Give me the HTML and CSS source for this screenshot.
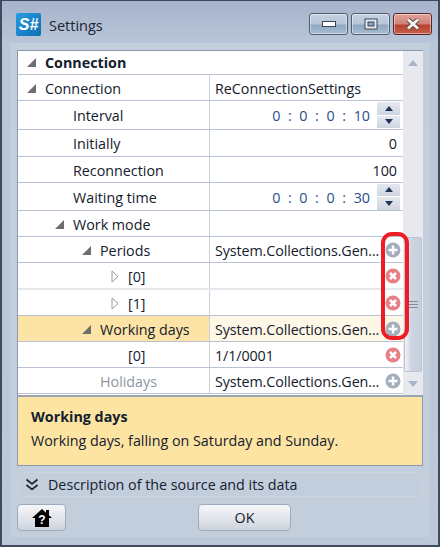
FILE: index.html
```html
<!DOCTYPE html>
<html lang="en">
<head>
<meta charset="utf-8">
<title>Settings</title>
<link rel="stylesheet" href="styles.css">
</head>
<body>
<div class="window">
  <header class="titlebar">
    <div class="logo">S#</div>
    <div class="title">Settings</div>
    <div class="controls">
      <div class="ctl"><svg width="14" height="8" viewBox="0 0 14 8"><rect x="0.5" y="1.5" width="13" height="5" fill="#fff" stroke="#3a4454"/></svg></div>
      <div class="ctl"><svg width="14" height="12" viewBox="0 0 14 12"><rect x="1" y="1" width="12" height="10" fill="#e9edf2" stroke="#3a4454"/><rect x="4" y="4" width="6" height="4" fill="#8fa3bb" stroke="#3a4454"/></svg></div>
      <div class="ctl close"><svg width="16" height="12" viewBox="0 0 16 12"><path d="M3 1.5l10 9M13 1.5l-10 9" stroke="#4a3a3a" stroke-width="4.4"/><path d="M3 1.5l10 9M13 1.5l-10 9" stroke="#f2f2f2" stroke-width="3"/></svg></div>
    </div>
  </header>
  <main class="panel">
    <section class="editor">
      <div class="gridwrap">
        <div class="rows">
          <div class="row head"><div class="name"><svg class="tri" width="9" height="9" viewBox="0 0 9 9"><path d="M9 0v9H0z"/></svg><b>Connection</b></div></div>
          <div class="row r26"><div class="name"><svg class="tri" width="9" height="9" viewBox="0 0 9 9"><path d="M9 0v9H0z"/></svg>Connection</div><div class="val">ReConnectionSettings</div></div>
          <div class="row r29"><div class="name l1">Interval</div><div class="val num"><span class="time">0 : 0 : 0 : 10</span><div class="spin"><span class="up"></span><span class="dn"></span></div></div></div>
          <div class="row r27"><div class="name l1">Initially</div><div class="val right">0</div></div>
          <div class="row r26"><div class="name l1">Reconnection</div><div class="val right">100</div></div>
          <div class="row r28"><div class="name l1">Waiting time</div><div class="val num"><span class="time">0 : 0 : 0 : 30</span><div class="spin"><span class="up"></span><span class="dn"></span></div></div></div>
          <div class="row r26"><div class="name l1t"><svg class="tri" width="9" height="9" viewBox="0 0 9 9"><path d="M9 0v9H0z"/></svg>Work mode</div><div class="val"></div></div>
          <div class="row r26"><div class="name l2t"><svg class="tri" width="9" height="9" viewBox="0 0 9 9"><path d="M9 0v9H0z"/></svg>Periods</div><div class="val"><span class="txt">System.Collections.Gen...</span><svg class="ic" width="16" height="16" viewBox="0 0 16 16"><use href="#plus"/></svg></div></div>
          <div class="row r27 soft"><div class="name l3t"><svg class="open" width="8" height="13" viewBox="0 0 8 13"><path d="M1 1l6 5.5L1 12z"/></svg>[0]</div><div class="val"><span class="txt"></span><svg class="ic" width="16" height="16" viewBox="0 0 16 16"><use href="#del"/></svg></div></div>
          <div class="row r26"><div class="name l3t"><svg class="open" width="8" height="13" viewBox="0 0 8 13"><path d="M1 1l6 5.5L1 12z"/></svg>[1]</div><div class="val"><span class="txt"></span><svg class="ic" width="16" height="16" viewBox="0 0 16 16"><use href="#del"/></svg></div></div>
          <div class="row r26 selected"><div class="name l2t"><svg class="tri" width="9" height="9" viewBox="0 0 9 9"><path d="M9 0v9H0z"/></svg>Working days</div><div class="val"><span class="txt">System.Collections.Gen...</span><svg class="ic" width="16" height="16" viewBox="0 0 16 16"><use href="#plus"/></svg></div></div>
          <div class="row r26"><div class="name l3">[0]</div><div class="val"><span class="txt">1/1/0001</span><svg class="ic" width="16" height="16" viewBox="0 0 16 16"><use href="#del"/></svg></div></div>
          <div class="row r26"><div class="name l2 muted">Holidays</div><div class="val"><span class="txt">System.Collections.Gen...</span><svg class="ic" width="16" height="16" viewBox="0 0 16 16"><use href="#plus"/></svg></div></div>
        </div>
        <div class="scroll">
          <div class="arrow aup"></div>
          <div class="track"><div class="thumb"><i></i><i></i><i></i></div></div>
          <div class="arrow adn"></div>
        </div>
        <div class="callout"></div>
      </div>
      <div class="desc">
        <div class="desc-h">Working days</div>
        <div class="desc-t">Working days, falling on Saturday and Sunday.</div>
      </div>
    </section>
    <div class="expander">
      <svg width="14" height="13" viewBox="0 0 14 13"><path d="M1.500 1.500L7 6l5.500-4.500M1.500 7L7 11.500 12.500 7" fill="none" stroke="#1c2430" stroke-width="1.700"/></svg>
      <span>Description of the source and its data</span>
    </div>
    <footer class="footer">
      <button class="btn home"><svg width="20" height="18" viewBox="0 0 20 18"><path d="M10 0L0 9h3v9h14V9h3l-3-2.700V1h-3v2.800z" fill="#000"/><text x="10" y="15" text-anchor="middle" class="q">?</text></svg></button>
      <button class="btn ok">OK</button>
    </footer>
  </main>
</div>
<svg class="defs" width="0" height="0">
  <defs>
    <g id="plus"><circle cx="8" cy="8" r="7.500" fill="#a3adbb"/><path d="M8 3.500v9M3.500 8h9" stroke="#fff" stroke-width="2.400"/></g>
    <g id="del"><circle cx="8" cy="8" r="7.500" fill="#e87f85"/><path d="M5 5l6 6M11 5l-6 6" stroke="#fff" stroke-width="2.600"/></g>
  </defs>
</svg>
</body>
</html>
```

FILE: styles.css
```css
* { box-sizing: border-box; }
html, body { margin: 0; height: 100%; }
body {
  font-family: "Open Sans", "Noto Sans", sans-serif;
  font-size: 14.3px;
  color: #14202e;
  overflow: hidden;
}
.defs { position: absolute; }
.window {
  width: 440px;
  height: 547px;
  display: flex;
  flex-direction: column;
  background: linear-gradient(#a6b3cc 0, #bac6d8 45px, #bcc8da 100%);
  border: 1px solid #3f4a5c;
  border-width: 1px 2px 2px 2px;
  padding: 0 8px 8px;
}
.titlebar {
  height: 42px;
  flex: none;
  display: flex;
  align-items: center;
  padding: 0 0 0 6px;
}
.logo {
  width: 25px;
  height: 23px;
  margin-top: 4px;
  background: linear-gradient(135deg, #2b9be0, #0a6fb4);
  color: #fff;
  font: italic bold 16px/23px "Liberation Sans", sans-serif;
  text-align: center;
  border-radius: 2px;
}
.title { margin: 6px 0 0 8px; font-size: 14.5px; flex: 1; color: #1a2430; }
.controls { display: flex; gap: 3px; margin: 4px -2px 0 0; }
.ctl {
  width: 39px;
  height: 22px;
  display: flex;
  align-items: center;
  justify-content: center;
  border: 1px solid #4f5d72;
  border-radius: 3px;
  background: linear-gradient(#c6d2e1 0, #b5c5d8 50%, #8fa8c1 55%, #a7bccf 100%);
  box-shadow: inset 0 0 0 1px rgba(255,255,255,.45);
}
.close {
  border-color: #5d2226;
  background: linear-gradient(#e0a39a 0, #d28075 50%, #b83f2c 55%, #c4604c 100%);
}
.panel {
  flex: 1;
  min-height: 0;
  display: flex;
  flex-direction: column;
  background: #c3cedd;
  padding: 7px;
  width: 420px;
}
.editor { border: 1px solid #8d99a9; background: #fff; height: 416px; flex: none; display: flex; flex-direction: column; }
.gridwrap { position: relative; display: flex; height: 344px; flex: none; }
.rows { width: 385px; flex: none; }
.row { display: flex; border-bottom: 1px solid #b9c3d3; }
.head { height: 24px; }
.r26 { height: 26px; }
.r27 { height: 27px; }
.r28 { height: 28px; }
.r29 { height: 29px; }
.soft { border-bottom: 2px solid #e4e7ec; }
.name {
  width: 192px;
  flex: none;
  display: flex;
  align-items: center;
  padding-left: 9px;
  padding-top: 1px;
  border-right: 1px solid #c9d1dd;
  white-space: nowrap;
}
.head .name { border-right: 0; padding-top: 0; }
.tri { fill: #6e6e6e; margin: 0 9px 0 0; flex: none; }
.open { fill: #fff; stroke: #9a9a9a; margin-right: 9px; flex: none; }
.l1 { padding-left: 55px; }
.l1t { padding-left: 37px; }
.l2t { padding-left: 64px; }
.l2 { padding-left: 82px; }
.l3t { padding-left: 93px; }
.l3 { padding-left: 110px; }
.muted { color: #8e96a2; }
.val {
  flex: 1;
  display: flex;
  align-items: center;
  padding: 1px 0 0 5px;
  white-space: nowrap;
  min-width: 0;
}
.txt { flex: 1; letter-spacing: -0.1px; }
.ic { margin-right: 2px; flex: none; }
.right { justify-content: flex-end; padding-right: 6px; }
.num { padding-right: 3px; }
.time { flex: 1; text-align: right; padding-right: 7px; color: #27508a; word-spacing: 3.9px; }
.spin { width: 23px; height: 26px; margin-top: -1px; display: flex; flex-direction: column; gap: 1px; }
.spin span {
  flex: 1;
  background: linear-gradient(#e6e9ef, #cfd5e0);
  display: flex;
  align-items: center;
  justify-content: center;
}
.spin span::after {
  content: "";
  border-left: 4px solid transparent;
  border-right: 4px solid transparent;
}
.spin .up::after { border-bottom: 5px solid #1d3559; }
.spin .dn::after { border-top: 5px solid #1d3559; }
.selected .name { background: #fde3a5; }
.selected .val { background: #fff7e6; }
.scroll {
  width: 20px;
  flex: none;
  background: #e7e9ee;
  display: flex;
  flex-direction: column;
  align-items: center;
  padding: 0 1px;
}
.arrow { flex: none; display: flex; align-items: center; justify-content: center; }
.arrow::after { content: ""; border-left: 5px solid transparent; border-right: 5px solid transparent; }
.aup { height: 20px; }
.aup::after { border-bottom: 6px solid #a9b5c7; margin-top: 4px; }
.adn { height: 24px; }
.adn::after { border-top: 6px solid #a9b5c7; }
.track { flex: 1; width: 100%; padding-top: 166px; }
.thumb {
  height: 135px;
  border: 1px solid #b9c3d2;
  border-radius: 2px;
  background: linear-gradient(90deg, #f2f3f6, #ced5e2 40%, #c6cede);
  display: flex;
  flex-direction: column;
  justify-content: center;
  align-items: center;
  gap: 2px;
}
.thumb i { width: 9px; height: 1px; background: #7f8da3; display: block; }
.callout {
  position: absolute;
  left: 363px;
  top: 181px;
  width: 28px;
  height: 108px;
  border: 4px solid #ee1c25;
  border-radius: 11px;
}
.desc {
  flex: 1;
  background: #fee4a2;
  border-top: 2px solid #9aa4b3;
  padding: 10px 13px;
}
.desc-h { font-weight: 700; line-height: 20px; }
.desc-t { line-height: 20px; margin-top: 4px; }
.expander {
  height: 25px;
  flex: none;
  margin-top: 6px;
  display: flex;
  align-items: center;
  gap: 9px;
  padding-left: 7px;
  border: 1px solid #cdd3d9;
  border-radius: 4px;
}
.footer { flex: 1; display: flex; justify-content: space-between; padding-top: 7px; }
.btn {
  height: 27px;
  border: 1px solid #9eabbd;
  border-radius: 4px;
  background: linear-gradient(#f6f7f9, #e3e6ec 50%, #cdd3dd);
  font: inherit;
  color: #14202e;
  padding: 0;
  display: flex;
  align-items: center;
  justify-content: center;
}
.home { width: 49px; }
.ok { width: 93px; margin-right: 132px; margin-left: auto; }
.q { font: bold 12px "Liberation Sans", sans-serif; fill: #fff; }
```
